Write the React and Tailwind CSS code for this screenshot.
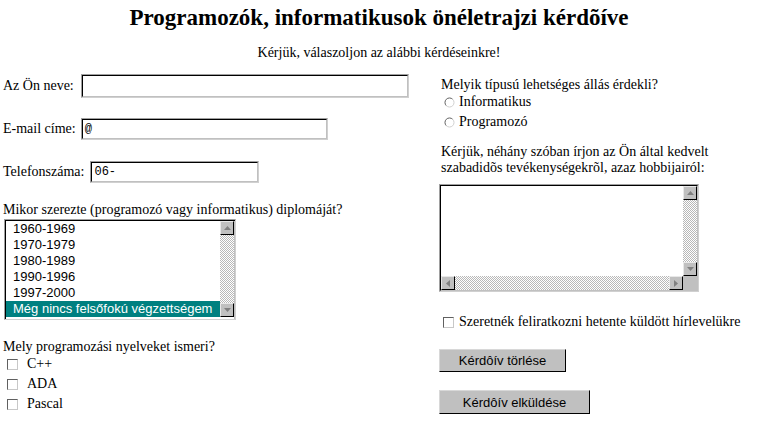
import React from "react";

const SERIF = "font-['Liberation_Serif','Times_New_Roman',serif]";
const SANS = "font-['Liberation_Sans',Arial,sans-serif]";

const YEARS = ["1960-1969", "1970-1979", "1980-1989", "1990-1996", "1997-2000"];

function TextBox({ className, value }) {
  return (
    <div
      className={`border border-t-[#a0a0a0] border-l-[#a0a0a0] border-r-[#d0d0d0] border-b-[#d0d0d0] ${className}`}
    >
      <div className="h-full border border-t-black border-l-black border-r-[#c0c0c0] border-b-[#c0c0c0] bg-white flex items-center pl-[2px] font-['Liberation_Mono',monospace] text-[12px] leading-none">
        {value}
      </div>
    </div>
  );
}

function Arrow({ dir }) {
  const horiz = dir === "left" || dir === "right";
  const pts = {
    up: "0,4 3.5,0 7,4",
    down: "0,0 3.5,4 7,0",
    left: "4,0 0,3.5 4,7",
    right: "0,0 4,3.5 0,7",
  }[dir];
  return (
    <div className="w-[14px] h-[14px] shrink-0 bg-[#c0c0c0] border border-t-[#e8e8e8] border-l-[#e8e8e8] border-r-black border-b-black flex items-center justify-center">
      <svg width={horiz ? 4 : 7} height={horiz ? 7 : 4}>
        <polygon points={pts} fill="#808080" />
      </svg>
    </div>
  );
}

function Check() {
  return (
    <div className="w-[11px] h-[11px] shrink-0 bg-white border border-t-[#606060] border-l-[#606060] border-r-[#c8c8c8] border-b-[#c8c8c8]" />
  );
}

function Radio() {
  return (
    <svg width="11" height="11" className="shrink-0">
      <circle cx="5.5" cy="5.5" r="4.5" fill="#fff" />
      <path d="M2.3 8.7 A4.5 4.5 0 0 1 8.7 2.3" fill="none" stroke="#606060" strokeWidth="1" />
      <path d="M8.7 2.3 A4.5 4.5 0 0 1 2.3 8.7" fill="none" stroke="#d0d0d0" strokeWidth="1" />
    </svg>
  );
}

function Track({ className }) {
  return (
    <div
      className={`bg-[image:repeating-conic-gradient(#b8b8b8_0_25%,#ffffff_0_50%)] bg-[length:2px_2px] ${className}`}
    />
  );
}

function Button({ className, children }) {
  return (
    <button
      className={`bg-[#c0c0c0] border border-t-[#d8d8d8] border-l-[#d8d8d8] border-r-black border-b-black ${SANS} text-[13px] leading-none text-black ${className}`}
    >
      {children}
    </button>
  );
}

export default function App() {
  return (
    <div className={`w-[758px] h-[435px] overflow-hidden bg-white text-black ${SERIF}`}>
      <h1 className="pt-[4px] text-center font-bold text-[23px] leading-[27px]">
        Programozók, informatikusok önéletrajzi kérdõíve
      </h1>
      <p className="mt-[14px] text-center text-[14px] leading-[16px]">
        Kérjük, válaszoljon az alábbi kérdéseinkre!
      </p>

      <div className="flex text-[14px] leading-[16px]">
        {/* left column */}
        <div className="w-[439px] pl-[3px]">
          <div className="mt-[13px] flex items-center">
            <span>Az Ön neve:</span>
            <TextBox className="ml-[7px] w-[328px] h-[24px]" />
          </div>
          <div className="mt-[20px] flex items-center">
            <span>E-mail címe:</span>
            <TextBox className="ml-[5px] w-[247px] h-[22px]" value="@" />
          </div>
          <div className="mt-[21px] flex items-center">
            <span>Telefonszáma:</span>
            <TextBox className="ml-[6px] w-[169px] h-[22px]" value="06-" />
          </div>

          <div className="mt-[19px]">Mikor szerezte (programozó vagy informatikus) diplomáját?</div>
          <div className="mt-px ml-px w-[232px] h-[101px] border border-t-[#a0a0a0] border-l-[#a0a0a0] border-r-[#d0d0d0] border-b-[#d0d0d0]">
            <div className="h-full flex border-t border-l border-black bg-white">
              <div className={`flex-1 ${SANS} text-[13px] leading-[16px]`}>
                {YEARS.map((y) => (
                  <div key={y} className="h-[16px] pl-[7px]">
                    {y}
                  </div>
                ))}
                <div className="h-[16px] pl-[7px] bg-[#008080] text-white">
                  Még nincs felsőfokú végzettségem
                </div>
              </div>
              <div className="w-[14px] flex flex-col">
                <Arrow dir="up" />
                <Track className="flex-1" />
                <Arrow dir="down" />
                <div className="h-[2px]" />
              </div>
              <div className="w-px bg-[#c0c0c0]" />
            </div>
          </div>

          <div className="mt-[19px]">Mely programozási nyelveket ismeri?</div>
          <div className="flex flex-col gap-[4px] mt-[1px]">
            {["C++", "ADA", "Pascal"].map((l) => (
              <div key={l} className="h-[16px] flex items-center">
                <div className="ml-[4px]">
                  <Check />
                </div>
                <span className="ml-[9px]">{l}</span>
              </div>
            ))}
          </div>
        </div>

        {/* right column */}
        <div className="flex-1">
          <div className="mt-[16px] pl-[2px]">Melyik típusú lehetséges állás érdekli?</div>
          <div className="mt-[1px] flex flex-col gap-[4px]">
            {["Informatikus", "Programozó"].map((l) => (
              <div key={l} className="h-[16px] flex items-center pl-[5px]">
                <Radio />
                <span className="ml-[4px]">{l}</span>
              </div>
            ))}
          </div>

          <div className="mt-[14px] pl-[2px]">
            Kérjük, néhány szóban írjon az Ön által kedvelt
            <br />
            szabadidõs tevékenységekrõl, azaz hobbijairól:
          </div>

          <div className="mt-[8px] w-[260px] h-[108px] border border-t-[#a0a0a0] border-l-[#a0a0a0] border-r-[#d0d0d0] border-b-[#d0d0d0]">
            <div className="h-full flex flex-col border border-t-black border-l-black border-r-[#c0c0c0] border-b-[#c0c0c0]">
              <div className="flex-1 flex">
                <div className="flex-1 bg-white" />
                <div className="w-[14px] flex flex-col">
                  <Arrow dir="up" />
                  <Track className="flex-1" />
                  <Arrow dir="down" />
                </div>
              </div>
              <div className="h-[14px] flex">
                <Arrow dir="left" />
                <Track className="flex-1" />
                <Arrow dir="right" />
                <div className="w-[14px] bg-[#c0c0c0]" />
              </div>
            </div>
          </div>

          <div className="mt-[22px] h-[16px] flex items-center pl-[4px]">
            <Check />
            <span className="ml-[5px]">Szeretnék feliratkozni hetente küldött hírlevelükre</span>
          </div>

          <Button className="mt-[19px] block w-[127px] h-[23px]">Kérdôív törlése</Button>
          <Button className="mt-[18px] block w-[151px] h-[24px]">Kérdôív elküldése</Button>
        </div>
      </div>
    </div>
  );
}
